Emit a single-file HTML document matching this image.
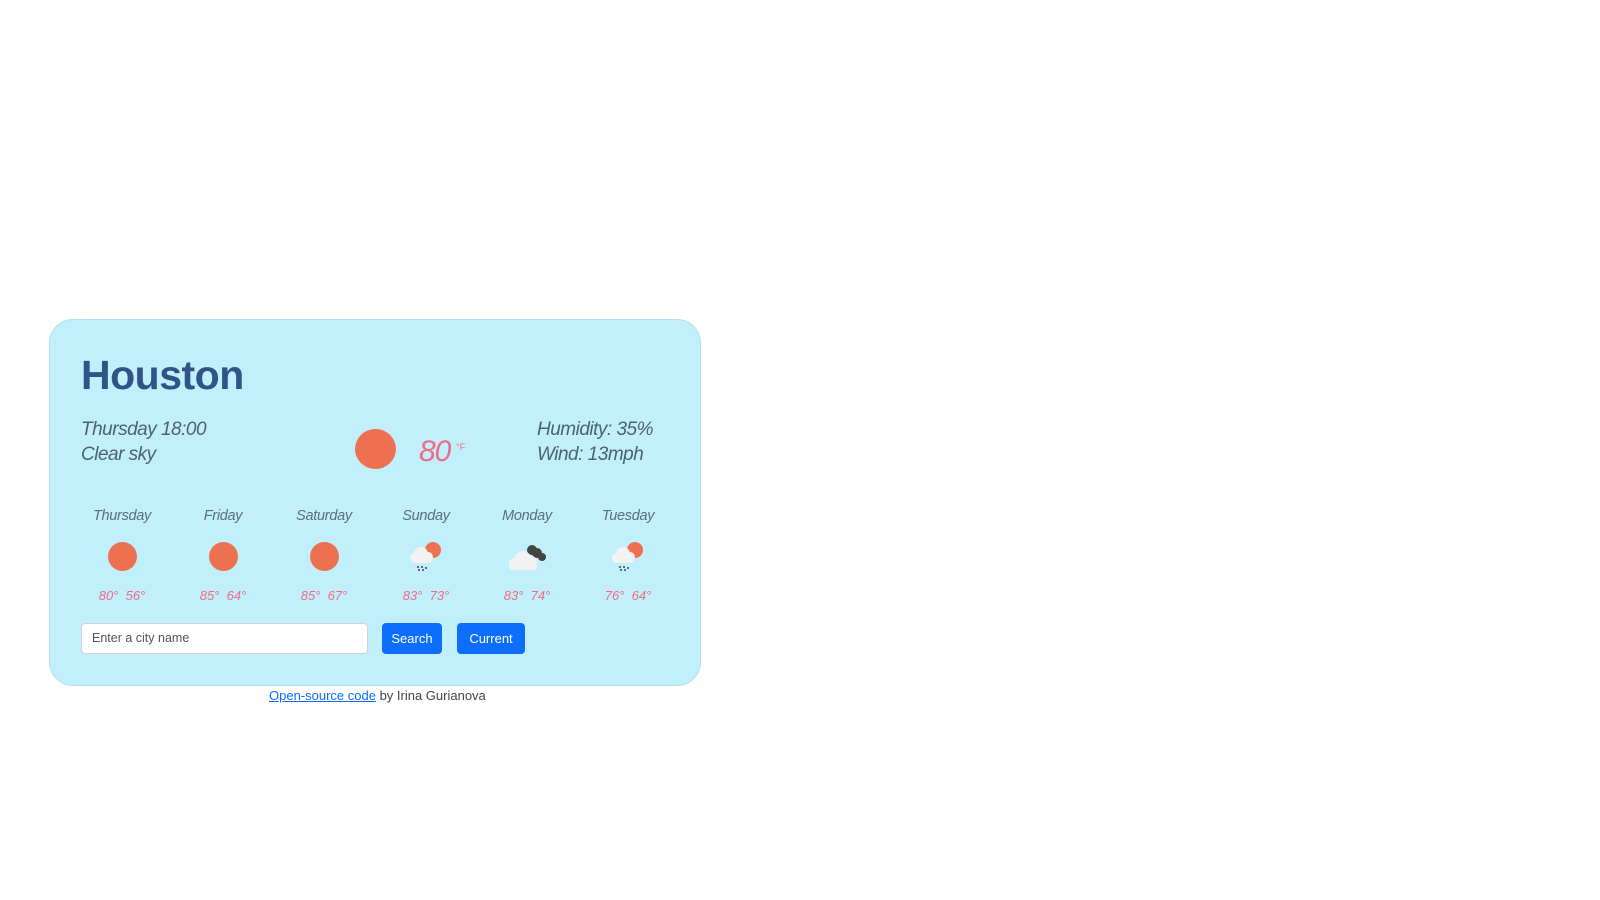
<!DOCTYPE html>
<html><head><style>
body{margin:0;width:1600px;height:900px;background:#fff;font-family:"Liberation Sans",sans-serif;position:relative;overflow:hidden}
.card{position:absolute;left:49px;top:319px;width:652px;height:367px;background:#c2effc;border-radius:24px;border:1px solid #b5dff5;box-sizing:border-box}
.a{position:absolute;white-space:nowrap}
h1{position:absolute;left:81px;top:352px;margin:0;font-size:41px;font-weight:bold;color:#2f5587;letter-spacing:-0.5px}
.it{font-style:italic;color:#4c6275;font-size:19px;font-weight:normal;letter-spacing:-0.5px}
.sun{position:absolute;border-radius:50%;background:#ed7150}
.day{position:absolute;width:100px;text-align:center;font-style:italic;color:#5a6f80;font-size:14.5px;letter-spacing:-0.3px}
.tmp{position:absolute;width:100px;text-align:center;font-style:italic;color:#f06c86;font-size:13px}
.btn{position:absolute;background:#0d6efd;color:#fff;border-radius:4px;font-size:13px;text-align:center;line-height:31px;height:31px}
</style></head><body>
<div class="card"></div>
<h1>Houston</h1>
<div class="a it" style="left:81px;top:419px">Thursday 18:00</div>
<div class="a it" style="left:81px;top:444px">Clear sky</div>
<div class="sun" style="left:355px;top:429px;width:41px;height:40px"></div>
<div class="a" style="left:419px;top:435px;font-style:italic;color:#f06c86;font-size:30px;letter-spacing:-1px">80</div>
<div class="a" style="left:456px;top:442px;color:#f06c86;font-size:9px">°F</div>
<div class="a it" style="left:537px;top:419px">Humidity: 35%</div>
<div class="a it" style="left:537px;top:444px">Wind: 13mph</div>

<div class="day" style="left:72px;top:508px">Thursday</div>
<div class="day" style="left:173px;top:508px">Friday</div>
<div class="day" style="left:274px;top:508px">Saturday</div>
<div class="day" style="left:376px;top:508px">Sunday</div>
<div class="day" style="left:477px;top:508px">Monday</div>
<div class="day" style="left:578px;top:508px">Tuesday</div>

<div class="sun" style="left:108px;top:542px;width:29px;height:29px"></div>
<div class="sun" style="left:209px;top:542px;width:29px;height:29px"></div>
<div class="sun" style="left:310px;top:542px;width:29px;height:29px"></div>
<svg class="a" style="left:406px;top:540px" width="40" height="34" viewBox="0 0 40 34">
<circle cx="27" cy="10" r="8" fill="#ed7150"/>
<circle cx="15" cy="14" r="7" fill="#f2f2f2"/><circle cx="9" cy="18" r="5" fill="#f2f2f2"/><circle cx="22" cy="17" r="5" fill="#f2f2f2"/><rect x="6" y="16" width="20" height="7" rx="3" fill="#f2f2f2"/>
<g fill="#444"><circle cx="12" cy="27" r="1"/><circle cx="16" cy="27" r="1"/><circle cx="13" cy="30" r="1"/><circle cx="17" cy="30" r="1"/><circle cx="20" cy="28" r="1"/></g></svg>
<svg class="a" style="left:505px;top:540px" width="46" height="34" viewBox="0 0 46 34">
<circle cx="27" cy="10" r="5" fill="#444"/><circle cx="32" cy="13" r="5" fill="#444"/><circle cx="37" cy="17" r="4" fill="#444"/>
<circle cx="18" cy="19" r="8" fill="#f2f2f2"/><circle cx="10" cy="24" r="6" fill="#f2f2f2"/><circle cx="26" cy="22" r="6" fill="#f2f2f2"/><rect x="4" y="22" width="28" height="8" rx="4" fill="#f2f2f2"/></svg>
<svg class="a" style="left:608px;top:540px" width="40" height="34" viewBox="0 0 40 34">
<circle cx="27" cy="10" r="8" fill="#ed7150"/>
<circle cx="15" cy="14" r="7" fill="#f2f2f2"/><circle cx="9" cy="18" r="5" fill="#f2f2f2"/><circle cx="22" cy="17" r="5" fill="#f2f2f2"/><rect x="6" y="16" width="20" height="7" rx="3" fill="#f2f2f2"/>
<g fill="#444"><circle cx="12" cy="27" r="1"/><circle cx="16" cy="27" r="1"/><circle cx="13" cy="30" r="1"/><circle cx="17" cy="30" r="1"/><circle cx="20" cy="28" r="1"/></g></svg>

<div class="tmp" style="left:72px;top:588px">80°&nbsp; 56°</div>
<div class="tmp" style="left:173px;top:588px">85°&nbsp; 64°</div>
<div class="tmp" style="left:274px;top:588px">85°&nbsp; 67°</div>
<div class="tmp" style="left:376px;top:588px">83°&nbsp; 73°</div>
<div class="tmp" style="left:477px;top:588px">83°&nbsp; 74°</div>
<div class="tmp" style="left:578px;top:588px">76°&nbsp; 64°</div>

<div class="a" style="left:81px;top:623px;width:287px;height:31px;background:#fff;border:1px solid #ced4da;border-radius:4px;box-sizing:border-box;font-size:12.5px;color:#555;line-height:29px;padding-left:10px">Enter a city name</div>
<div class="btn" style="left:382px;top:623px;width:60px">Search</div>
<div class="btn" style="left:457px;top:623px;width:68px">Current</div>
<div class="a" style="left:269px;top:688px;font-size:13px;color:#444"><span style="color:#0d6efd;text-decoration:underline">Open-source code</span> by Irina Gurianova</div>
</body></html>
